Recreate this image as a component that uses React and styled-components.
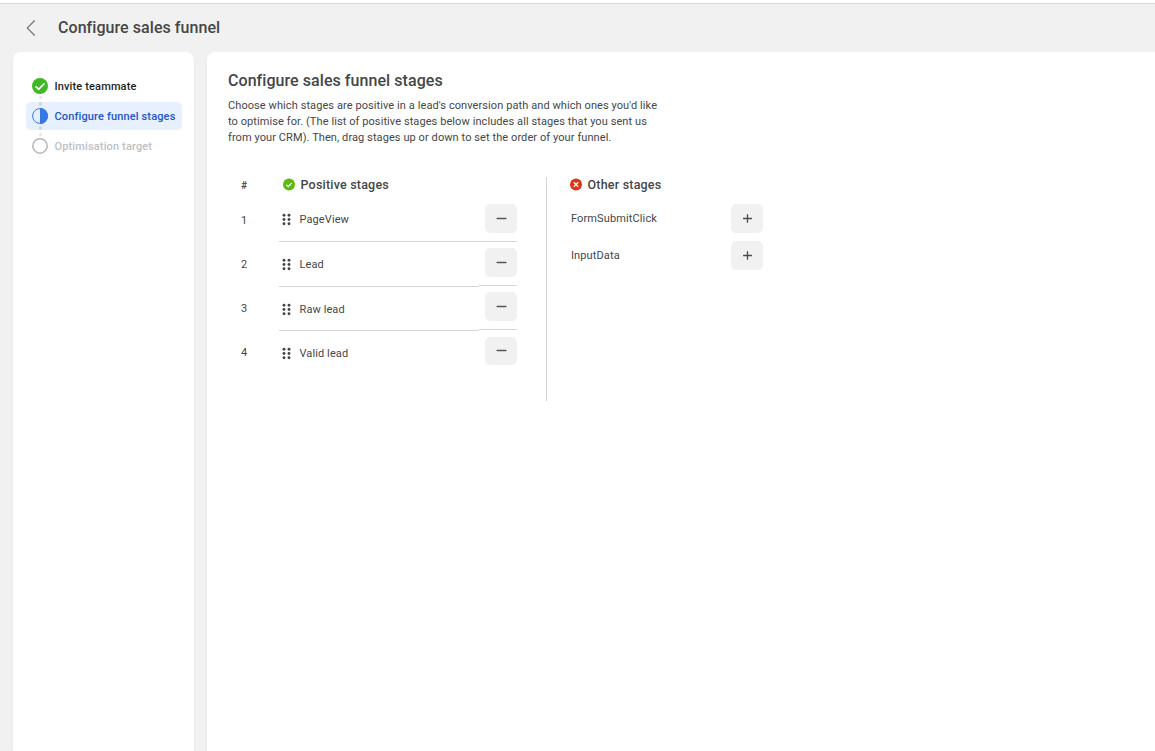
import React from "react";
import styled, { createGlobalStyle } from "styled-components";

const GlobalStyle = createGlobalStyle`
  * {
    box-sizing: border-box;
  }

  body {
    margin: 0;
    background: #f1f1f1;
    color: #444648;
    font-family: Roboto, "Liberation Sans", sans-serif;
    overflow: hidden;
  }

  h1, h2, h3, p, ul, ol {
    margin: 0;
    padding: 0;
    list-style: none;
  }
`;

const steps = [
  { label: "Invite teammate", status: "done" },
  { label: "Configure funnel stages", status: "active" },
  { label: "Optimisation target", status: "pending" },
];

const positiveStages = ["PageView", "Lead", "Raw lead", "Valid lead"];
const otherStages = ["FormSubmitClick", "InputData"];

const StepIcon = ({ status }) => {
  if (status === "done") {
    return (
      <svg width="16" height="16" viewBox="0 0 16 16">
        <circle cx="8" cy="8" r="8" fill="#3fb824" />
        <path d="M3.6 8.3l3 3 5.8-5.8" fill="none" stroke="#fff" strokeWidth="1.7" />
      </svg>
    );
  }
  if (status === "active") {
    return (
      <svg width="16" height="16" viewBox="0 0 16 16">
        <circle cx="8" cy="8" r="7.4" fill="none" stroke="#3578e5" strokeWidth="1" />
        <path d="M8 0a8 8 0 0 1 0 16z" fill="#3578e5" />
      </svg>
    );
  }
  return (
    <svg width="16" height="16" viewBox="0 0 16 16">
      <circle cx="8" cy="8" r="7.2" fill="none" stroke="#b3b6bb" strokeWidth="1.5" />
    </svg>
  );
};

const BackIcon = () => (
  <svg width="10" height="18" viewBox="0 0 10 18">
    <path d="M8.7 1.5L1.2 9l7.5 7.5" fill="none" stroke="#707070" strokeWidth="1.1" />
  </svg>
);

const CheckBadge = () => (
  <svg width="12" height="13" viewBox="0 0 12 13">
    <circle cx="6" cy="6.5" r="6" fill="#5fb80f" />
    <path d="M3.3 6.7l1.9 1.9 3.6-3.7" fill="none" stroke="#fff" strokeWidth="1.3" />
  </svg>
);

const CrossBadge = () => (
  <svg width="12" height="13" viewBox="0 0 12 13">
    <circle cx="6" cy="6.5" r="6" fill="#df3416" />
    <path d="M3.8 4.3l4.4 4.4M8.2 4.3L3.8 8.7" fill="none" stroke="#fff" strokeWidth="1.3" />
  </svg>
);

const DragIcon = () => (
  <svg width="9" height="13" viewBox="0 0 9 13">
    {[2.2, 6.5, 10.8].map((y) => (
      <g key={y} fill="#454545">
        <circle cx="2" cy={y} r="1.45" />
        <circle cx="7" cy={y} r="1.45" />
      </g>
    ))}
  </svg>
);

const MinusIcon = () => (
  <svg width="11" height="9" viewBox="0 0 11 9">
    <path d="M1.2 4.5h8.6" stroke="#555" strokeWidth="1.6" strokeLinecap="round" />
  </svg>
);

const PlusIcon = () => (
  <svg width="11" height="9" viewBox="0 0 11 9">
    <path d="M1.1 4.5h8.8M5.5 .2v8.6" stroke="#4a4a4a" strokeWidth="1.3" />
  </svg>
);

const App = () => {
  return (
    <>
      <GlobalStyle />
      <Page>
        <TopStrip />
        <Header>
          <BackButton aria-label="Back"><BackIcon /></BackButton>
          <PageTitle>Configure sales funnel</PageTitle>
        </Header>
        <Body>
          <Sidebar>
            {steps.map(({ label, status }, i) => (
              <React.Fragment key={label}>
                {i > 0 && <Connector />}
                <Step $status={status}>
                  <StepIcon status={status} />
                  {label}
                  {status === "active" && (
                    <>
                      <Dot $top="0" />
                      <Dot $top="24px" />
                    </>
                  )}
                </Step>
              </React.Fragment>
            ))}
          </Sidebar>

          <Main>
            <SectionTitle>Configure sales funnel stages</SectionTitle>
            <Description>
              Choose which stages are positive in a lead's conversion path and which ones you'd like
              <br />
              to optimise for. (The list of positive stages below includes all stages that you sent us
              <br />
              from your CRM). Then, drag stages up or down to set the order of your funnel.
            </Description>

            <Stages>
              <Positive>
                <NumberColumn>
                  <NumberHead>#</NumberHead>
                  {positiveStages.map((stage, i) => (
                    <StageNumber key={stage}>{i + 1}</StageNumber>
                  ))}
                </NumberColumn>
                <div>
                  <StageHead $indent="4px"><CheckBadge />Positive stages</StageHead>
                  <StageRows>
                    {positiveStages.map((stage) => (
                      <StageName key={stage}><DragIcon />{stage}</StageName>
                    ))}
                  </StageRows>
                </div>
                <ActionColumn>
                  {positiveStages.map((stage) => (
                    <ActionCell key={stage}>
                      <IconButton aria-label={`Remove ${stage}`}><MinusIcon /></IconButton>
                    </ActionCell>
                  ))}
                </ActionColumn>
              </Positive>

              <Other>
                <StageHead $indent="0"><CrossBadge />Other stages</StageHead>
                <OtherList>
                  {otherStages.map((stage) => (
                    <OtherRow key={stage}>
                      {stage}
                      <IconButton aria-label={`Add ${stage}`}><PlusIcon /></IconButton>
                    </OtherRow>
                  ))}
                </OtherList>
              </Other>
            </Stages>
          </Main>
        </Body>
      </Page>
    </>
  );
};

const Page = styled.div`
  display: flex;
  flex-direction: column;
  height: 100vh;
`;

const TopStrip = styled.div`
  flex: none;
  height: 4px;
  background: #fff;
  border-bottom: 1px solid #dadada;
`;

const Header = styled.header`
  flex: none;
  display: flex;
  align-items: center;
  height: 48px;
  padding-left: 26px;
`;

const BackButton = styled.button`
  display: flex;
  width: 32px;
  padding: 0;
  border: 0;
  background: none;
`;

const PageTitle = styled.h1`
  font-size: 16px;
  font-weight: 500;
  line-height: 20px;
  letter-spacing: 0.06px;
`;

const Body = styled.div`
  flex: 1;
  display: flex;
  gap: 13px;
  padding-left: 13px;
  min-height: 0;
`;

const Sidebar = styled.ol`
  width: 181px;
  padding: 20px 12px 0 13px;
  background: #fff;
  border-radius: 8px 8px 0 0;
  box-shadow: 0 1px 3px rgba(0, 0, 0, 0.06);
`;

const stepColors = {
  done: "#1c1e21",
  active: "#2457c5",
  pending: "#bec1c5",
};

const Step = styled.li`
  position: relative;
  display: flex;
  align-items: center;
  gap: 6.5px;
  height: 28px;
  padding-left: 6px;
  border-radius: 5px;
  font-size: 11px;
  font-weight: 500;
  letter-spacing: 0.14px;
  white-space: nowrap;
  color: ${({ $status }) => stepColors[$status]};
  background: ${({ $status }) => ($status === "active" ? "#e6f0fe" : "transparent")};
`;

const Connector = styled.li`
  display: flex;
  height: 2px;
  padding-left: 13px;

  &::before {
    content: "";
    width: 3px;
    height: 3px;
    margin-top: -4px;
    border-radius: 50%;
    background: #e4e5e7;
  }

  /* below the active step the dot sits closer to the next circle */
  li + & ~ &::before {
    margin-top: 3px;
  }
`;

const Dot = styled.span`
  position: absolute;
  left: 13px;
  top: ${({ $top }) => $top};
  width: 3px;
  height: 4px;
  border-radius: 50%;
  background: #cbd6e4;
`;

const Main = styled.main`
  flex: 1;
  padding: 19px 0 0 21px;
  background: #fff;
  border-radius: 8px 0 0 0;
  box-shadow: 0 1px 3px rgba(0, 0, 0, 0.06);
`;

const SectionTitle = styled.h2`
  font-size: 16px;
  font-weight: 500;
  line-height: 20px;
  letter-spacing: 0.06px;
`;

const Description = styled.p`
  margin-top: 7px;
  font-size: 11px;
  line-height: 16px;
  letter-spacing: 0.085px;
  white-space: nowrap;
`;

const Stages = styled.div`
  display: flex;
  margin-top: 31px;
`;

const Positive = styled.section`
  display: grid;
  grid-template-columns: 51px 200px 38px;
  width: 319px;
  height: 224px;
  border-right: 1px solid #d4d5d7;
  font-size: 11px;
`;

const NumberColumn = styled.div`
  display: grid;
  grid-template-rows: 20px 45px repeat(3, 44px);
  align-content: start;
  align-items: center;
  padding-left: 13px;
`;

const NumberHead = styled.span`
  font-weight: 500;
  font-size: 10px;
  line-height: 12px;
  padding-bottom: 3px;
`;

const StageNumber = styled.span`
  &:nth-child(2) {
    padding-top: 2px;
  }
`;

const StageHead = styled.h3`
  display: flex;
  align-items: center;
  gap: 5.5px;
  height: 15px;
  margin-bottom: 5px;
  padding-left: ${({ $indent }) => $indent};
  font-size: 12.5px;
  font-weight: 500;
  letter-spacing: 0.2px;
  white-space: nowrap;
`;

const StageRows = styled.ul`
  display: grid;
  grid-template-rows: 45px 45px 44px 44px;
`;

const StageName = styled.li`
  display: flex;
  align-items: center;
  gap: 8.5px;
  padding-left: 3px;
  letter-spacing: 0.1px;
  border-bottom: 1px solid #d4d5d7;

  &:nth-child(3) {
    padding-top: 1px;
  }

  &:last-child {
    border-bottom: 0;
  }
`;

const ActionColumn = styled.ul`
  display: grid;
  grid-template-rows: 45px repeat(3, 44px);
  padding-top: 20px;
  align-content: start;
`;

const IconButton = styled.button`
  display: flex;
  align-items: center;
  justify-content: center;
  width: 32px;
  height: 29px;
  padding: 0 0 0 1px;
  border: 0;
  border-radius: 5px;
  background: #f1f1f1;
`;

const ActionCell = styled.li`
  padding: 6px 0 0 6px;
  border-bottom: 1px solid #d4d5d7;

  &:first-child {
    padding-top: 7px;
  }

  &:last-child {
    padding-top: 7px;
    border-bottom: 0;
  }

  &:last-child ${IconButton} {
    height: 28px;
    padding-bottom: 1px;
  }
`;

const Other = styled.section`
  width: 216px;
  padding-left: 23px;
`;

const OtherList = styled.ul`
  display: grid;
  gap: 8px;
  margin-top: 12px;
`;

const OtherRow = styled.li`
  display: flex;
  align-items: center;
  justify-content: space-between;
  padding-left: 1px;
  font-size: 11px;
  letter-spacing: 0.12px;
`;

export default App;
